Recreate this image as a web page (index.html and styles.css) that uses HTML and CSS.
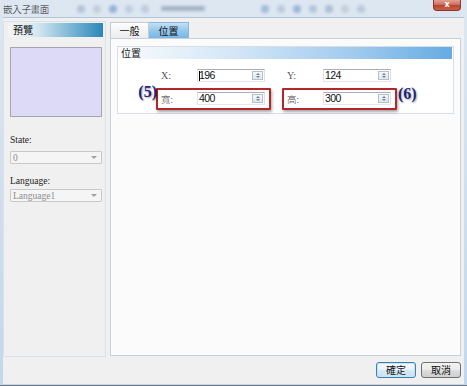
FILE: index.html
```html
<!DOCTYPE html>
<html lang="zh-Hant">
<head>
<meta charset="utf-8">
<title>嵌入子畫面</title>
<link rel="stylesheet" href="styles.css">
</head>
<body>
<div class="window">
  <div class="titlebar">
    <span class="title">嵌入子畫面</span>
    <div class="ghosts">
      <span class="g g1"></span><span class="g g2"></span><span class="g g3"></span><span class="g g4"></span><span class="g g5"></span>
      <span class="g gtext"></span>
      <span class="g g6"></span><span class="g g7"></span><span class="g g8"></span><span class="g g9"></span><span class="g g10"></span><span class="g g11"></span><span class="g g12"></span>
    </div>
    <div class="close">x</div>
  </div>
  <div class="body">
    <aside class="side">
      <div class="side-head">預覽</div>
      <div class="preview"></div>
      <div class="lbl">State:</div>
      <div class="combo"><span>0</span><i class="arr"></i></div>
      <div class="lbl lang">Language:</div>
      <div class="combo"><span>Language1</span><i class="arr"></i></div>
    </aside>
    <main class="main">
      <div class="tabs">
        <div class="tab">一般</div>
        <div class="tab active">位置</div>
      </div>
      <div class="panel">
        <div class="group">
          <div class="group-head">位置</div>
          <div class="rows">
            <div class="row">
              <div class="field">
                <span class="flabel">X:</span>
                <div class="input"><i class="caret"></i><span class="val">196</span><div class="spin"><i class="up"></i><i class="down"></i></div></div>
              </div>
              <div class="field">
                <span class="flabel">Y:</span>
                <div class="input"><span class="val">124</span><div class="spin"><i class="up"></i><i class="down"></i></div></div>
              </div>
            </div>
            <div class="row row2">
              <div class="field hl">
                <span class="note note5">(5)</span>
                <span class="flabel cjk">寬:</span>
                <div class="input"><span class="val">400</span><div class="spin"><i class="up"></i><i class="down"></i></div></div>
              </div>
              <div class="field hl">
                <span class="flabel cjk">高:</span>
                <div class="input"><span class="val">300</span><div class="spin"><i class="up"></i><i class="down"></i></div></div>
                <span class="note note6">(6)</span>
              </div>
            </div>
          </div>
        </div>
      </div>
      <div class="buttons">
        <div class="btn default">確定</div>
        <div class="btn">取消</div>
      </div>
    </main>
  </div>
</div>
</body>
</html>
```
FILE: styles.css
```css
html, body {
  margin: 0;
  padding: 0;
  background: #ffffff;
}

.window {
  width: 467px;
  height: 386px;
  box-sizing: border-box;
  display: flex;
  flex-direction: column;
  background: linear-gradient(#dde7f1, #c3d7ec);
  border-bottom: 1px solid #6e7680;
  font-family: "Liberation Serif", "Noto Sans CJK TC", serif;
  color: #222;
  overflow: hidden;
}

/* title bar */
.titlebar {
  height: 17px;
  display: flex;
  align-items: center;
  flex-shrink: 0;
}
.title {
  font-family: "Noto Sans CJK TC", sans-serif;
  font-weight: 300;
  font-size: 9.5px;
  line-height: 12px;
  margin-left: 3px;
  color: #1b1b1b;
  letter-spacing: -0.3px;
}
.ghosts {
  display: flex;
  align-items: center;
  margin-left: 28px;
  filter: blur(1.6px);
  opacity: 0.5;
}
.g {
  display: block;
  width: 8px;
  height: 8px;
  border-radius: 50%;
  background: #8ea3bd;
  margin-right: 8px;
}
.g2 { background: #a9b6c6; }
.g3 { background: #4d7fc0; }
.g4 { background: #a2b4cc; }
.g5 { background: #9fb0c6; margin-right: 12px; }
.gtext { width: 44px; height: 5px; border-radius: 2px; background: #6d7f96; margin-right: 56px; }
.g6 { background: #6a92c8; }
.g7 { background: #9bb0c8; }
.g8 { background: #5c86c4; }
.g9 { background: #8fa6c2; }
.g10 { background: #7e98ba; }
.g11 { background: #aab8c8; }
.g12 { background: #9aacc2; margin-right: 0; }

.close {
  margin-left: auto;
  margin-right: 6px;
  align-self: flex-start;
  width: 28px;
  height: 11px;
  box-sizing: border-box;
  border: 1px solid #8c3528;
  border-top: none;
  border-radius: 0 0 4px 4px;
  background: linear-gradient(#e2a093, #cc6a58 50%, #b9452f 55%, #c9604a);
  color: #ffffff;
  font-family: "DejaVu Sans", sans-serif;
  font-weight: bold;
  font-size: 8px;
  line-height: 9px;
  text-align: center;
}

/* body */
.body {
  flex: 1;
  display: flex;
  margin: 0 3px 1px 3px;
  background: #f0f0f0;
  border-top: 1px solid #b3c4d6;
}

/* left side */
.side {
  width: 103px;
  box-sizing: border-box;
  margin: 3px 0 27px 0;
  border: 1px solid #dbe1e8;
  padding: 1px 2px 0 4px;
  display: flex;
  flex-direction: column;
}
.side-head {
  height: 14px;
  width: 95px;
  background: linear-gradient(to right, #f5f5f5 0%, #d6e8f1 30%, #7db8d6 65%, #2a87b7 100%);
  font-family: "Noto Sans CJK TC", sans-serif;
  font-size: 10px;
  line-height: 14px;
  padding-left: 5px;
  box-sizing: border-box;
  color: #111;
}
.preview {
  width: 92px;
  height: 70px;
  box-sizing: border-box;
  margin: 10px 0 0 2px;
  background: #dcdaf7;
  border: 1px solid #a5a5b2;
}
.lbl {
  margin: 17px 0 0 2px;
  height: 12px;
  line-height: 12px;
  font-size: 9.5px;
  color: #222;
}
.lbl.lang { margin-top: 11px; }
.combo {
  width: 92px;
  height: 13px;
  box-sizing: border-box;
  margin: 5px 0 0 2px;
  border: 1px solid #c9c9c9;
  border-radius: 1px;
  background: #f5f5f5;
  display: flex;
  align-items: center;
  padding-left: 2px;
  font-size: 9.5px;
  color: #8d8d8d;
}
.lbl.lang + .combo { margin-top: 2px; }
.arr {
  margin-left: auto;
  margin-right: 4px;
  width: 0;
  height: 0;
  border-left: 3px solid transparent;
  border-right: 3px solid transparent;
  border-top: 3px solid #a0a0a0;
}

/* right side */
.main {
  width: 351px;
  margin: 4px 0 0 4px;
  display: flex;
  flex-direction: column;
}
.tabs {
  display: flex;
  height: 16px;
}
.tab {
  width: 39px;
  height: 16px;
  box-sizing: border-box;
  border: 1px solid #c2ccd6;
  border-bottom: none;
  background: linear-gradient(#fdfdfd, #ececec);
  font-family: "Noto Sans CJK TC", sans-serif;
  font-size: 10px;
  line-height: 15px;
  text-align: center;
  color: #111;
}
.tab.active {
  width: 40px;
  border-left: none;
  border-color: #8ab8dc;
  background: linear-gradient(#c4e0f5, #95c7ec 50%, #78b6e4);
}
.panel {
  height: 318px;
  box-sizing: border-box;
  border: 1px solid #c6d1dc;
  background: #fbfbfb;
  padding: 7px 6px;
}
.group {
  height: 68px;
  box-sizing: border-box;
  border: 1px solid #d9dee6;
  background: #ffffff;
  padding-right: 1px;
}
.group-head {
  height: 12px;
  background: linear-gradient(to right, #f9fbfd 0%, #d3e6f6 35%, #a2cbee 70%, #66abe3 100%);
  font-family: "Noto Sans CJK TC", sans-serif;
  font-size: 10px;
  line-height: 12px;
  padding-left: 3px;
  color: #222;
}
.rows {
  margin: 6px 0 0 38px;
}
.row {
  display: flex;
  gap: 11px;
}
.row2 { margin-top: 1px; }
.field {
  position: relative;
  width: 115px;
  height: 22px;
  box-sizing: border-box;
  border: 2px solid transparent;
  padding: 2px 4px 3px 3px;
  display: flex;
  align-items: center;
}
.field.hl {
  border-color: #b3262b;
  border-radius: 1px;
  box-shadow: 1px 2px 3px rgba(0, 0, 0, 0.35);
}
.flabel {
  width: 36px;
  font-size: 10px;
  color: #555;
}
.flabel.cjk {
  font-family: "Noto Sans CJK TC", sans-serif;
  font-weight: 300;
  font-size: 9.5px;
  color: #444;
}
.input {
  width: 68px;
  height: 13px;
  box-sizing: border-box;
  border: 1px solid;
  border-color: #abadb3 #dbdfe6 #e3e9ef #e2e3ea;
  background: #ffffff;
  display: flex;
  align-items: center;
  padding-left: 1px;
}
.caret {
  width: 1px;
  height: 10px;
  background: #000;
  margin-right: -1px;
}
.val {
  font-family: "Liberation Sans Narrow", "Liberation Sans", sans-serif;
  font-size: 10.5px;
  line-height: 11px;
  letter-spacing: -0.6px;
  color: #111;
}
.spin {
  margin-left: auto;
  margin-right: 1px;
  width: 11px;
  height: 9px;
  box-sizing: border-box;
  border: 1px solid #b4c0cc;
  background: linear-gradient(#f6f8fa, #e1e7ee);
  display: flex;
  flex-direction: column;
  justify-content: space-evenly;
  align-items: center;
}
.up {
  width: 0;
  height: 0;
  border-left: 2px solid transparent;
  border-right: 2px solid transparent;
  border-bottom: 2px solid #6f8196;
}
.down {
  width: 0;
  height: 0;
  border-left: 2px solid transparent;
  border-right: 2px solid transparent;
  border-top: 2px solid #6f8196;
}
.note {
  position: absolute;
  font-family: "Liberation Serif", serif;
  font-weight: bold;
  font-size: 16px;
  line-height: 16px;
  color: #1d2479;
  text-shadow: 1px 1px 2px rgba(0, 0, 0, 0.35);
}
.note5 {
  right: calc(100% + 1px);
  top: -6px;
}
.note6 {
  left: calc(100% + 3px);
  top: -4px;
}

/* buttons */
.buttons {
  display: flex;
  justify-content: flex-end;
  gap: 5px;
  margin-top: 6px;
}
.btn {
  width: 40px;
  height: 16px;
  box-sizing: border-box;
  border: 1px solid #707070;
  border-radius: 3px;
  background: linear-gradient(#f2f2f2 0%, #ebebeb 50%, #dddddd 51%, #cfcfcf 100%);
  font-family: "Noto Sans CJK TC", sans-serif;
  font-size: 10px;
  line-height: 14px;
  text-align: center;
  color: #111;
}
.btn.default {
  border-color: #3c7fb1;
  box-shadow: inset 0 0 0 1px #c6e6f8;
  background: linear-gradient(#f4f9fc 0%, #e8f3fa 50%, #d7e9f5 51%, #c9e1f1 100%);
}
```
